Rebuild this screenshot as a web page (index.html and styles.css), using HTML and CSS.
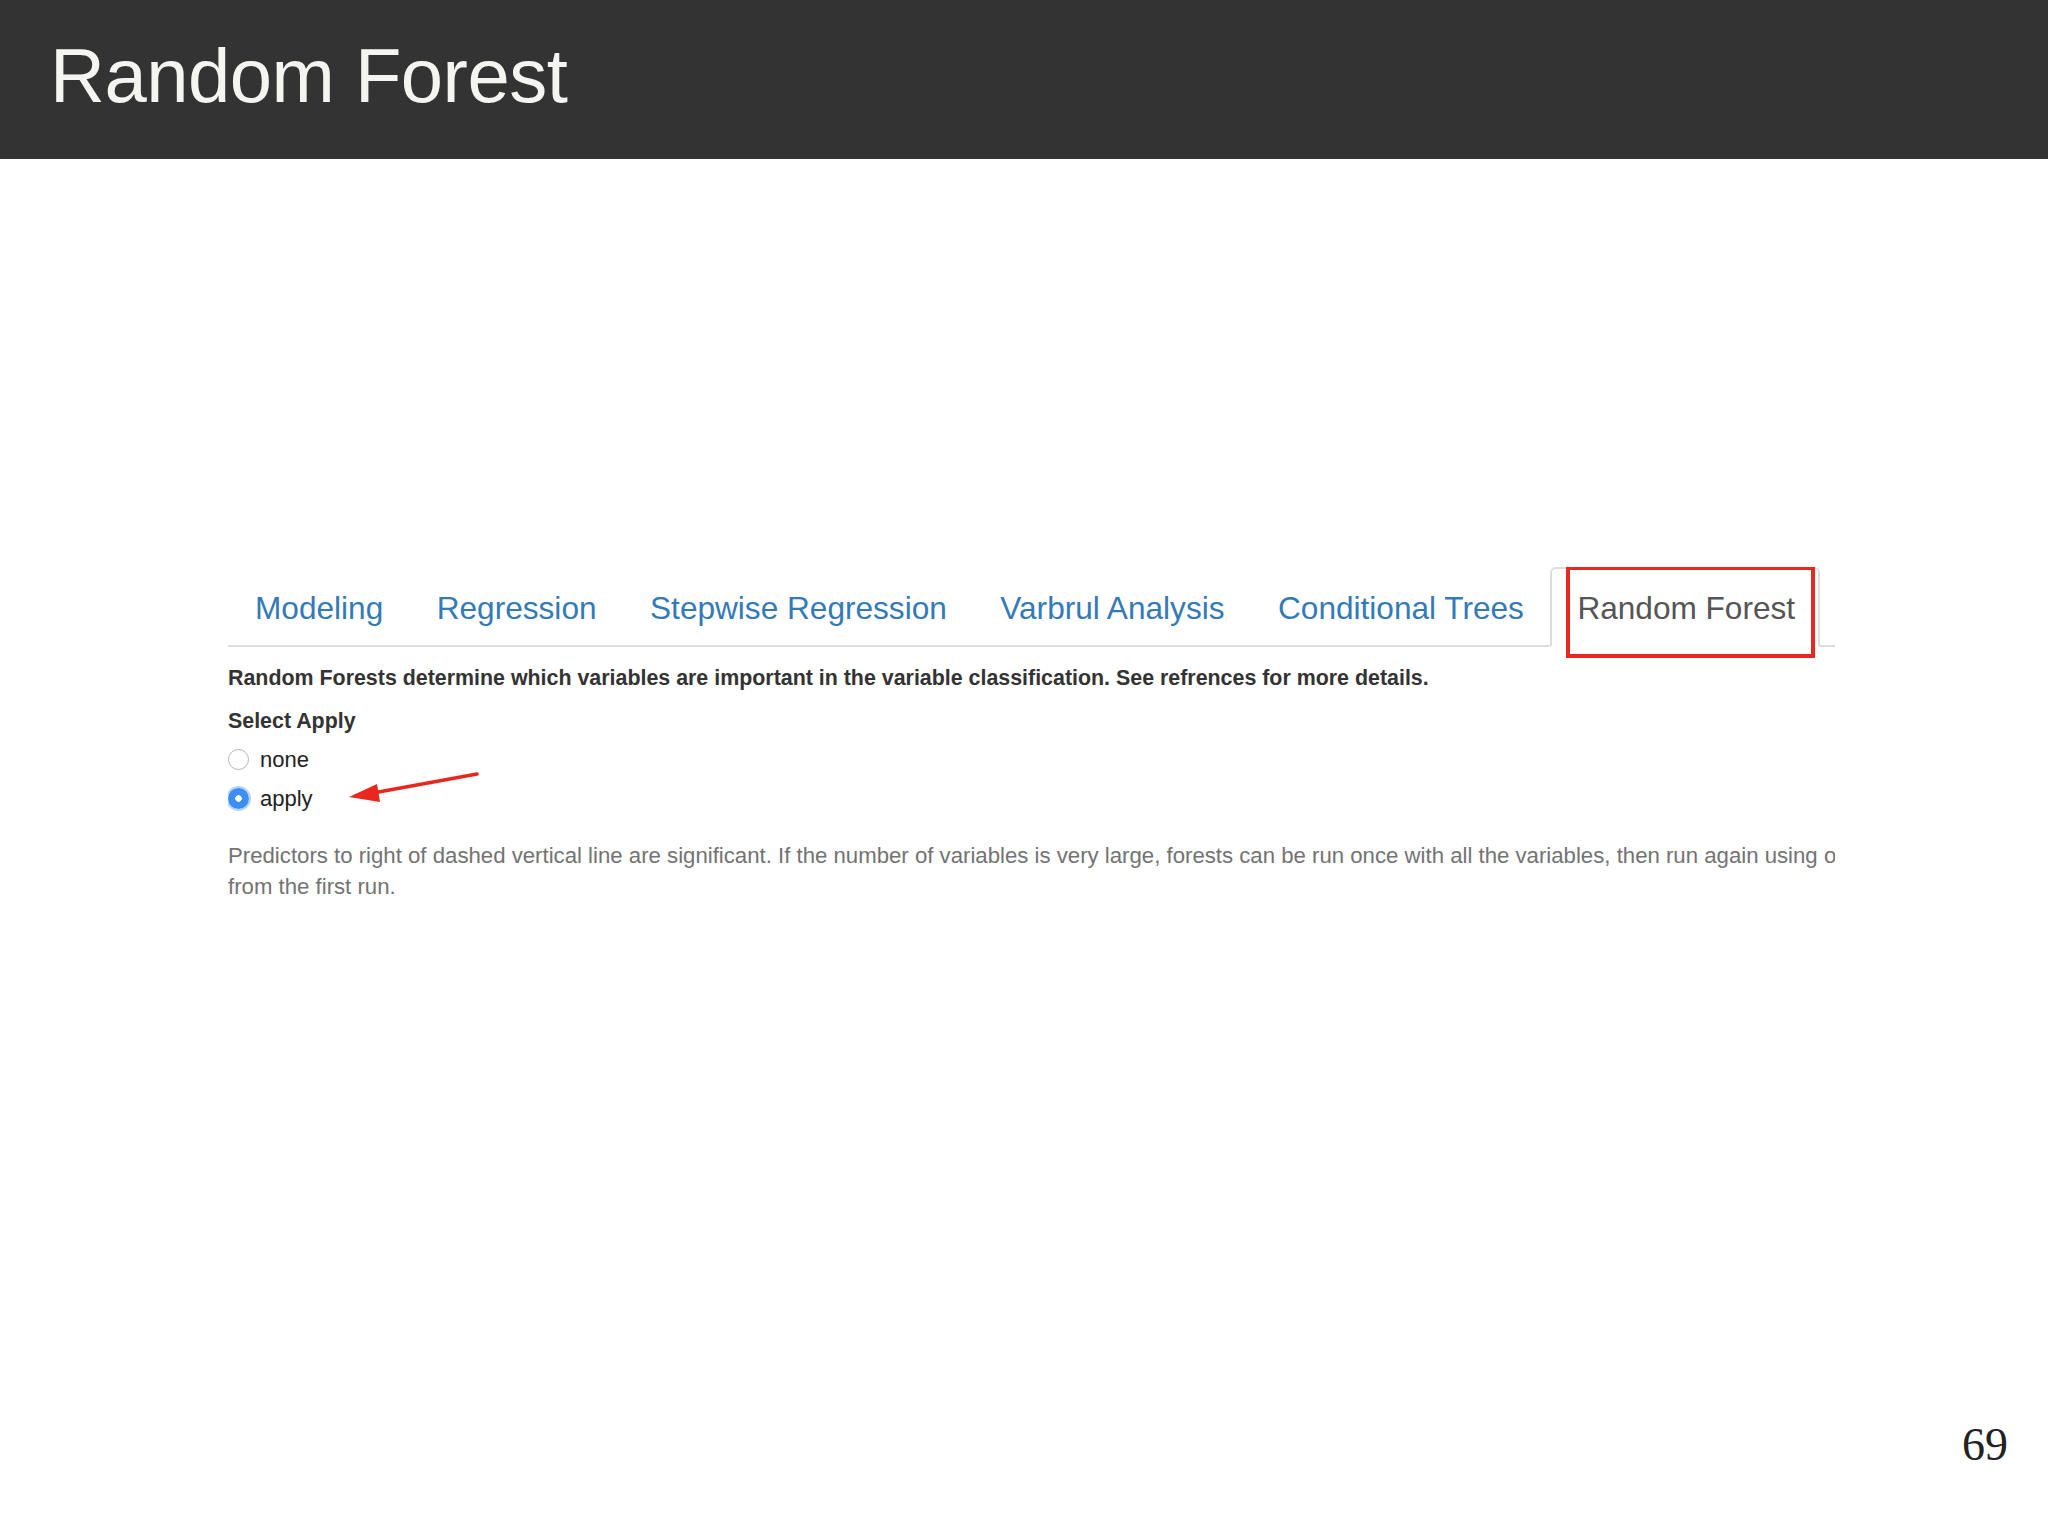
FILE: index.html
```html
<!DOCTYPE html>
<html>
<head>
<meta charset="utf-8">
<link rel="stylesheet" href="styles.css">
</head>
<body>
<div class="slide">
  <header class="slide-header">
    <h1 class="slide-title">Random Forest</h1>
  </header>
  <main class="content">
    <ul class="tabs">
      <li class="tab"><a class="tab-link">Modeling</a></li>
      <li class="tab"><a class="tab-link">Regression</a></li>
      <li class="tab"><a class="tab-link">Stepwise Regression</a></li>
      <li class="tab"><a class="tab-link">Varbrul Analysis</a></li>
      <li class="tab"><a class="tab-link">Conditional Trees</a></li>
      <li class="tab active"><a class="tab-link">Random Forest</a><span class="highlight-box"></span></li>
    </ul>
    <div class="pane">
      <p class="lead">Random Forests determine which variables are important in the variable classification. See refrences for more details.</p>
      <div class="group">
        <div class="group-label">Select Apply</div>
        <label class="radio"><span class="radio-dot"></span><span>none</span></label>
        <label class="radio"><span class="radio-dot checked"></span><span>apply</span>
          <svg class="arrow" width="130" height="34" viewBox="0 0 130 34">
            <line x1="128" y1="3" x2="24" y2="22" stroke="#e8281f" stroke-width="3.5" stroke-linecap="round"/>
            <polygon points="0,26 28,13 31,31" fill="#e8281f"/>
          </svg>
        </label>
      </div>
      <div class="help">
        <div class="help-line">Predictors to right of dashed vertical line are significant. If the number of variables is very large, forests can be run once with all the variables, then run again using only the significant variables</div>
        <div class="help-line">from the first run.</div>
      </div>
    </div>
  </main>
  <div class="page-number">69</div>
</div>
</body>
</html>
```
FILE: styles.css
```css
html, body {
  margin: 0;
  padding: 0;
  background: #ffffff;
}
.slide {
  position: relative;
  width: 2048px;
  height: 1536px;
  overflow: hidden;
  font-family: "Liberation Sans", Arial, sans-serif;
}
.slide-header {
  height: 159px;
  background: #333333;
  display: flex;
  align-items: center;
  padding-left: 50px;
}
.slide-title {
  margin: 0;
  margin-top: -8px;
  font-weight: normal;
  font-size: 76px;
  letter-spacing: -0.5px;
  color: #f4f4f0;
}
.content {
  margin: 408px 0 0 228px;
  width: 1607px;
  overflow: hidden;
}
.tabs {
  list-style: none;
  margin: 0;
  padding: 0;
  display: flex;
  height: 78px;
  border-bottom: 2px solid #dddddd;
}
.tab {
  position: relative;
  margin-right: 2px;
  margin-bottom: -2px;
  display: flex;
}
.tab-link {
  display: flex;
  align-items: center;
  padding: 2px 22.5px 0 25px;
  font-size: 31.6px;
  color: #337ab7;
  border: 2px solid transparent;
  border-radius: 6px 6px 0 0;
}
.tab.active .tab-link {
  color: #555555;
  border-color: #dddddd;
  border-bottom-color: #ffffff;
  background: #ffffff;
}
.highlight-box {
  position: absolute;
  left: 16px;
  right: 5px;
  top: -1px;
  bottom: -11px;
  border: 4px solid #e8281f;
}
.pane {
  padding-top: 16px;
  color: #333333;
}
.lead {
  margin: 0;
  font-size: 21.4px;
  font-weight: bold;
  line-height: 30px;
}
.group {
  margin-top: 13px;
}
.group-label {
  font-size: 21.4px;
  font-weight: bold;
  line-height: 30px;
  margin-bottom: 4px;
}
.radio {
  position: relative;
  display: flex;
  align-items: center;
  gap: 11px;
  height: 39px;
  font-size: 22px;
  color: #222222;
}
.radio-dot {
  box-sizing: border-box;
  width: 21px;
  height: 21px;
  border-radius: 50%;
  border: 1.5px solid #b5b5b5;
  background: #ffffff;
}
.radio-dot.checked {
  border: none;
  background: radial-gradient(circle, #ffffff 0 3px, #3b8ff3 3.5px);
  box-shadow: 0 0 0 2px rgba(90, 160, 240, 0.45);
}
.arrow {
  position: absolute;
  left: 121px;
  top: -8px;
}
.help {
  margin-top: 22px;
  color: #737373;
  font-size: 22.2px;
  line-height: 31px;
}
.help-line {
  white-space: nowrap;
}
.page-number {
  position: absolute;
  left: 1962px;
  top: 1418px;
  font-family: "Liberation Serif", "Times New Roman", serif;
  font-size: 46px;
  color: #222222;
}
```
